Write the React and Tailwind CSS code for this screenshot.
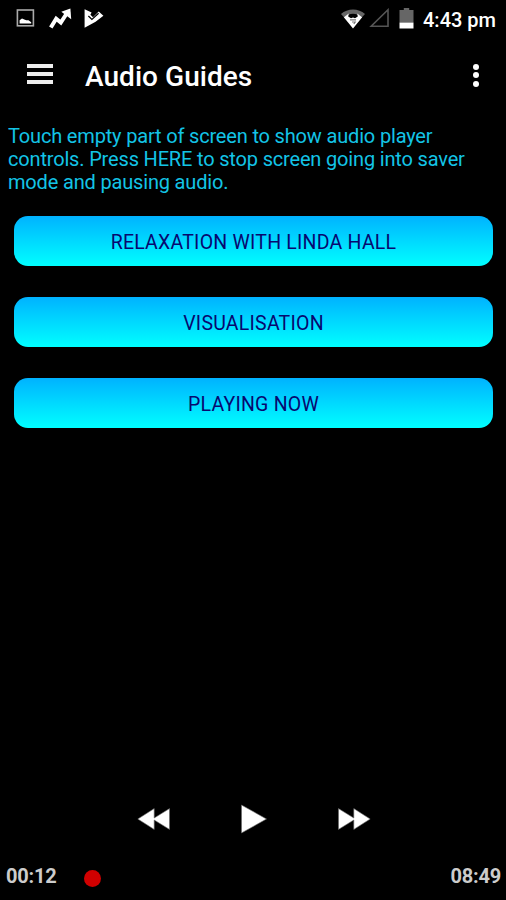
const guides = ["RELAXATION WITH LINDA HALL", "VISUALISATION", "PLAYING NOW"];

function StatusBar() {
  return (
    <div className="flex h-[38px] items-center pl-[16px] pr-[11px]">
      <svg className="h-[20px] w-[20px]" viewBox="0 0 20 20">
        <rect x="1.4" y="1" width="16" height="15.8" fill="none" stroke="#aaa" strokeWidth="1.6" />
        <path d="M3.6 14.4V11.2L6 9.4L8.3 10.6L10.3 11.2L12.5 11.2L15.2 13.2V14.4Z" fill="#fff" />
      </svg>
      <svg className="ml-[12px] h-[24px] w-[24px]" viewBox="0 0 24 24">
        <path d="M2.8 20.5L8.2 11.8L12.8 15.5L18.7 6.5" fill="none" stroke="#fff" strokeWidth="4" />
        <path d="M13.3 4.7L22.4 1.6L23.2 12.2Z" fill="#fff" />
      </svg>
      <svg className="ml-[11px] h-[22px] w-[22px]" viewBox="0 0 22 22">
        <path d="M1.6 1.2L8.6 4.4L7.4 6.8L10 9.3L15.7 3.4L20.4 7.8L12.6 13.8L1.6 19.8Z" fill="#fff" />
        <path d="M5.4 8L8.9 11.5L15.6 5.2" fill="none" stroke="#000" strokeWidth="1.2" />
      </svg>
      <div className="ml-auto flex items-center">
        <svg className="h-[22px] w-[26px]" viewBox="0 0 26 22">
          <path d="M1 6C7.5 0 18.5 0 25 6L22 9.3C17 4.5 9 4.5 4 9.3Z" fill="#666" />
          <path d="M3.8 9.3L8.8 5.4L8.2 8.6L11 10.3L13 9.6L15 10.3L17.8 8.6L17.2 5.4L22.2 9.3L13 20.4Z" fill="#fff" />
          <path d="M10 11.8L16 11.8M12 14H15.2L13.8 16" fill="none" stroke="#777" strokeWidth="1.2" />
        </svg>
        <svg className="ml-[3px] h-[22px] w-[21px]" viewBox="0 0 21 22">
          <path d="M2.2 18.3H19V1.8Z" fill="none" stroke="#555" strokeWidth="1.6" />
        </svg>
        <svg className="ml-[9px] h-[22px] w-[15px]" viewBox="0 0 15 22">
          <path d="M4.8 0H10.2V2H14.5V14.5H.5V2H4.8Z" fill="#666" />
          <path d="M.5 14.5H14.5V20.5H.5Z" fill="#fff" />
        </svg>
        <span className="ml-[9px] w-[72px] whitespace-nowrap pt-px text-[20px] leading-[24px] font-medium">4:43 pm</span>
      </div>
    </div>
  );
}

function Toolbar() {
  return (
    <header className="flex h-[76px] items-center pl-[27px] pr-[27px]">
      <button aria-label="Menu" className="flex w-[26px] flex-col gap-[4px] pb-[4px]">
        <span className="h-[4px] bg-[#eee]" />
        <span className="h-[4px] bg-[#eee]" />
        <span className="h-[4px] bg-[#eee]" />
      </button>
      <h1 className="ml-[32px] whitespace-nowrap pt-[2px] text-[28px] leading-[32px] font-medium tracking-[0.05px]">Audio Guides</h1>
      <button aria-label="More options" className="ml-auto flex flex-col gap-[2.5px] pb-[2px]">
        <span className="size-[6px] rounded-full bg-white" />
        <span className="size-[6px] rounded-full bg-white" />
        <span className="size-[6px] rounded-full bg-white" />
      </button>
    </header>
  );
}

function Player() {
  return (
    <footer className="mt-auto">
      <div className="flex h-[34px] items-center justify-between pl-[137px] pr-[135px]">
        <svg aria-label="Rewind" className="h-[22px] w-[34px]" viewBox="0 0 34 22">
          <path d="M.8 11L17.2 .6V10L32.5 .6V21.4L17.2 12V21.4Z" fill="#fff" stroke="#666" strokeWidth=".6" />
        </svg>
        <svg aria-label="Play" className="h-[30px] w-[28px]" viewBox="0 0 28 30">
          <path d="M1.5 1L26.5 15L1.5 29Z" fill="#fff" stroke="#666" strokeWidth=".6" />
        </svg>
        <svg aria-label="Fast forward" className="h-[22px] w-[34px]" viewBox="0 0 34 22">
          <path d="M33.2 11L16.8 .6V10L1.5 .6V21.4L16.8 12V21.4Z" fill="#fff" stroke="#666" strokeWidth=".6" />
        </svg>
      </div>
      <div className="mt-[24px] mb-[4px] flex h-[36px] items-center pl-[6px] pr-[5px] text-[20px] leading-[24px] font-bold text-[#ccc]">
        <span className="w-[51px] pb-[4px] tracking-[-0.2px]">00:12</span>
        <span className="ml-[27px] size-[17px] rounded-full bg-[#d00000]" />
        <span className="ml-auto pb-[4px] tracking-[-0.2px]">08:49</span>
      </div>
    </footer>
  );
}

export default function App() {
  return (
    <div className="flex h-[900px] w-[506px] flex-col overflow-hidden bg-black font-['Roboto',sans-serif] text-white">
      <StatusBar />
      <Toolbar />
      <p className="mt-[11px] whitespace-nowrap pl-[8px] text-[20px] leading-[23.2px] tracking-[-0.17px] text-[#13c4e6]">
        Touch empty part of screen to show audio player<br />
        controls. Press HERE to stop screen going into saver<br />
        mode and pausing audio.
      </p>
      <div className="mt-[21.4px] flex flex-col gap-[31px] pl-[14px] pr-[13px]">
        {guides.map((title) => (
          <button key={title} className="h-[50px] rounded-[14px] bg-linear-to-b from-[#00b2ff] to-[#00ffff] pt-[4px] text-[19.5px] leading-[24px] tracking-[0.23px] text-[#08086f]">
            {title}
          </button>
        ))}
      </div>
      <Player />
    </div>
  );
}
